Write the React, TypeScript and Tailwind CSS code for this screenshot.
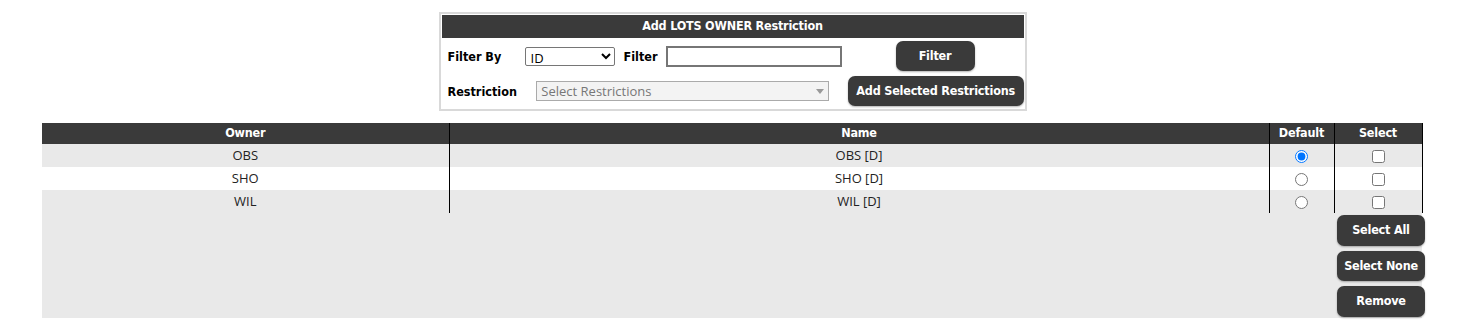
import React from 'react';

const bold = "font-['DejaVu_Sans_Condensed','DejaVu_Sans',sans-serif] font-bold";
const body = "font-['Open_Sans','Noto_Sans',sans-serif]";

const rows = [
  { owner: 'OBS', name: 'OBS [D]', def: true },
  { owner: 'SHO', name: 'SHO [D]', def: false },
  { owner: 'WIL', name: 'WIL [D]', def: false },
];

const DarkButton: React.FC<{ label: string; className?: string }> = ({ label, className = '' }) => (
  <button
    className={`${bold} bg-[#3a3a3a] text-white text-[12.5px] tracking-[-0.2px] rounded-[7px] shadow-[0_1px_2px_rgba(0,0,0,0.3)] whitespace-nowrap ${className}`}
  >
    {label}
  </button>
);

export default function App() {
  return (
    <div className="w-[1465px] bg-white pt-[12px] pb-[18px]">
      {/* painel de filtro */}
      <div className="mx-auto w-[588px] border-2 border-[#d9d9d9] p-[1px]">
        <div className={`${bold} h-[23px] bg-[#3a3a3a] text-white text-[12.5px] tracking-[-0.2px] flex items-center justify-center`}>
          Add LOTS OWNER Restriction
        </div>
        <div className="flex items-center h-[35px] pl-[6px] pt-[1px]">
          <span className={`${bold} text-[12.5px] text-black w-[77px] pt-[2px]`}>Filter By</span>
          <select className={`${body} w-[90px] h-[19px] border border-[#767676] rounded-[2px] text-[13px] leading-none px-[1px] bg-white text-black`}>
            <option>ID</option>
          </select>
          <span className={`${bold} text-[12.5px] text-black ml-[9px] w-[42px] pt-[2px]`}>Filter</span>
          <input className="w-[176px] h-[21px] border-2 border-[#767676] bg-white" />
          <DarkButton label="Filter" className="ml-[54px] w-[79px] h-[30px]" />
        </div>
        <div className="flex items-center h-[35px] pl-[6px] pt-[1px]">
          <span className={`${bold} text-[12.5px] text-black w-[89px] pt-[2px]`}>Restriction</span>
          <div className={`${body} w-[293px] h-[20px] border border-[#aaaaaa] bg-[#f3f3f3] text-[13px] text-[#777] pl-[4px] pt-[1px] flex items-center justify-between pr-[4px]`}>
            <span>Select Restrictions</span>
            <span className="w-0 h-0 border-l-[4px] border-r-[4px] border-t-[5px] border-l-transparent border-r-transparent border-t-[#999]" />
          </div>
          <DarkButton label="Add Selected Restrictions" className="ml-[19px] w-[176px] h-[30px]" />
        </div>
      </div>

      {/* tabela de restrições */}
      <div className="ml-[42px] mt-[12px] w-[1380px]">
        <table className="w-full border-collapse table-fixed">
          <thead>
            <tr className={`${bold} bg-[#3a3a3a] text-white text-[12.5px] tracking-[-0.2px] h-[21px]`}>
              <th className="w-[407px] font-bold">Owner</th>
              <th className="w-[820px] font-bold border-l border-black">Name</th>
              <th className="w-[65px] font-bold border-l border-black">Default</th>
              <th className="w-[88px] font-bold border-l border-black border-r">Select</th>
            </tr>
          </thead>
          <tbody className={`${body} text-[13px] text-[#222]`}>
            {rows.map((r, i) => (
              <tr key={r.owner} className={`h-[23px] ${i % 2 === 0 ? 'bg-[#e9e9e9]' : 'bg-white'}`}>
                <td className="text-center p-0">{r.owner}</td>
                <td className="text-center p-0 border-l border-black">{r.name}</td>
                <td className="text-center p-0 border-l border-black">
                  <input type="radio" name="def" defaultChecked={r.def} className="align-middle m-0 w-[13px] h-[13px]" />
                </td>
                <td className="text-center p-0 border-l border-r border-black">
                  <input type="checkbox" className="align-middle m-0 w-[13px] h-[13px]" />
                </td>
              </tr>
            ))}
          </tbody>
        </table>
        <div className="bg-[#e9e9e9] h-[105px] flex flex-col items-end gap-[5px] pt-[2px]">
          <DarkButton label="Select All" className="w-[88px] h-[31px] -mr-[3px]" />
          <DarkButton label="Select None" className="w-[88px] h-[30px] -mr-[3px]" />
          <DarkButton label="Remove" className="w-[88px] h-[31px] -mr-[3px]" />
        </div>
      </div>
    </div>
  );
}
